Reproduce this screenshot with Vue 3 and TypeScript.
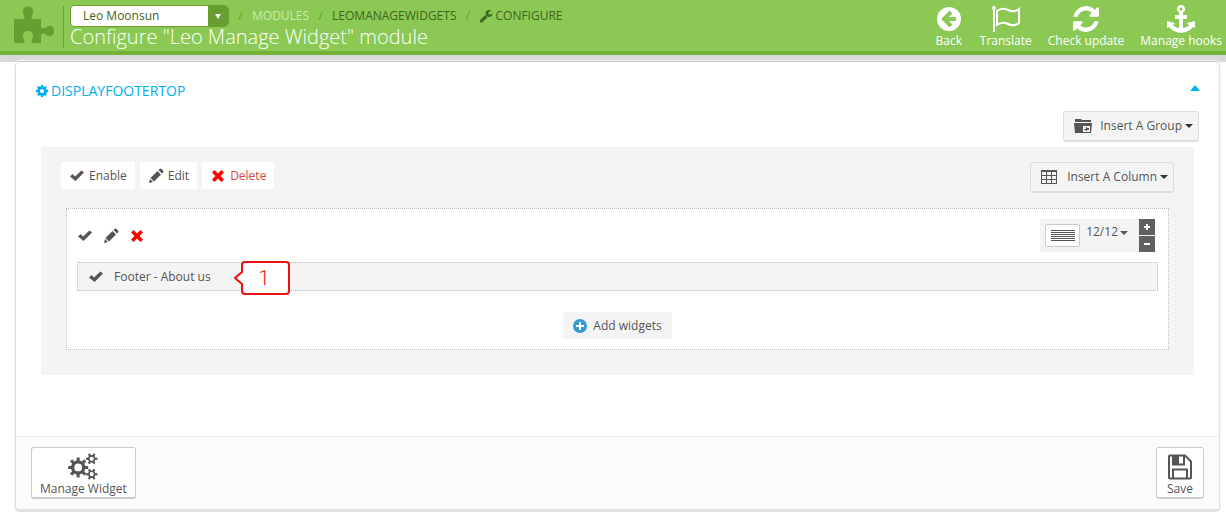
<script setup lang="ts">
import { ref } from 'vue'

const glyphs: Record<string, string> = {
  cog: 'M1152 896q0-106-75-181t-181-75-181 75-75 181 75 181 181 75 181-75 75-181zm512-109v222q0 12-8 23t-20 13l-185 28q-19 54-39 91 35 50 107 138 10 12 10 25t-9 23q-27 37-99 108t-94 71q-12 0-26-9l-138-108q-44 23-91 38-16 136-29 186-7 28-36 28h-222q-14 0-24.5-8.5t-11.5-21.5l-28-184q-49-16-90-37l-141 107q-10 9-25 9-14 0-25-11-126-114-165-168-7-10-7-23 0-12 8-23 15-21 51-66.5t54-70.5q-27-50-41-99l-183-27q-13-2-21-12.5t-8-23.5v-222q0-12 8-23t19-13l186-28q14-46 39-92-40-57-107-138-10-12-10-24 0-10 9-23 26-36 98.5-107.5t94.5-71.5q13 0 26 10l138 107q44-23 91-38 16-136 29-186 7-28 36-28h222q14 0 24.5 8.5t11.5 21.5l28 184q49 16 90 37l142-107q9-9 24-9 13 0 25 10 129 119 165 170 7 8 7 22 0 12-8 23-15 21-51 66.5t-54 70.5q26 50 41 98l183 28q13 2 21 12.5t8 23.5z',
  refresh: 'M1639 1056q0 5-1 7-64 268-268 434.5t-478 166.5q-146 0-282.5-55t-243.5-157l-129 129q-19 19-45 19t-45-19-19-45v-448q0-26 19-45t45-19h448q26 0 45 19t19 45-19 45l-137 137q71 66 161 102t187 36q134 0 250-65t186-179q11-17 53-117 8-23 30-23h192q13 0 22.5 9.5t9.5 22.5zm25-800v448q0 26-19 45t-45 19h-448q-26 0-45-19t-19-45 19-45l138-138q-148-137-349-137-134 0-250 65t-186 179q-11 17-53 117-8 23-30 23h-199q-13 0-22.5-9.5t-9.5-22.5v-7q65-268 270-434.5t480-166.5q146 0 284 55.5t245 156.5l130-129q19-19 45-19t45 19 19 45z',
  wrench: 'M448 1472q0-26-19-45t-45-19-45 19-19 45 19 45 45 19 45-19 19-45zm644-420l-682 682q-37 37-90 37-52 0-91-37l-106-108q-38-36-38-90 0-53 38-91l681-681q39 98 114.5 173.5t173.5 114.5zm634-435q0 39-23 106-47 134-164.5 217.5t-258.5 83.5q-185 0-316.5-131.5t-131.5-316.5 131.5-316.5 316.5-131.5q58 0 121.5 16.5t107.5 46.5q16 11 16 28t-16 28l-293 169v224l193 107q5-3 79-48.5t135.5-81 70.5-35.5q15 0 23.5 10t8.5 25z',
  check: 'M1 8.5L3.500 6 6 8.500 12.500 2.500 15 4.500 6.500 13z',
  pencil: 'M1 15l1-4 3 3zM2.500 10L9.500 3l3.500 3.500-7 7zM10.500 2l1-1q1-1 2 0l1.500 1.500q1 1 0 2l-1 1z',
  times: 'M2 4.500L4.500 2 8 5.500 11.500 2 14 4.500 10.500 8 14 11.500 11.500 14 8 10.500 4.500 14 2 11.500 5.500 8z'
}

function gear(cx: number, cy: number, outer: number, inner: number, hole: number, teeth: number): string {
  const step = (Math.PI * 2) / teeth
  const points: string[] = []
  const at = (r: number, a: number) => points.push(`${(cx + r * Math.cos(a)).toFixed(2)} ${(cy + r * Math.sin(a)).toFixed(2)}`)
  for (let i = 0; i < teeth; i++) {
    const a = i * step
    at(inner, a - step * 0.27)
    at(outer, a - step * 0.19)
    at(outer, a + step * 0.19)
    at(inner, a + step * 0.27)
  }
  return `M${points.join('L')}ZM${cx - hole} ${cy}a${hole} ${hole} 0 1 0 ${hole * 2} 0a${hole} ${hole} 0 1 0 ${-hole * 2} 0Z`
}

const gears = gear(11, 16, 10.5, 7.5, 4, 8) + gear(25, 7, 6, 4, 2.2, 6) + gear(25, 23, 6, 4, 2.2, 6)

const shop = ref('Leo Moonsun')
const columnSize = ref(12)
const open = ref(true)

function resize(step: number) {
  columnSize.value = Math.min(12, Math.max(1, columnSize.value + step))
}
</script>

<template>
  <div class="page">
    <header class="topbar">
      <svg class="puzzle" viewBox="0 0 40 37" aria-hidden="true">
        <path d="M0 13h9q2-1 1-4-1-1-1-4 0-4.500 5-4.500t5 4.500q0 3-1 4-1 3 1 4h8v8q1 2 4 1 2-2 5-2 4 0 4 5t-4 5q-3 0-5-2-3-1-4 1v8h-9q-1-2 0-4 1-1 1-4 0-4-5-4t-5 4q0 3 1 4 1 2 0 4H0z" />
      </svg>
      <div class="heading">
        <nav class="crumbs" aria-label="Breadcrumb">
          <span class="shop">
            <select v-model="shop" aria-label="Shop">
              <option>Leo Moonsun</option>
            </select>
            <svg viewBox="0 0 20 20" aria-hidden="true"><path d="M7 8h6l-3 5z" /></svg>
          </span>
          <span class="slash">/</span>
          <a href="#modules" class="pale">MODULES</a>
          <span class="slash">/</span>
          <a href="#leomanagewidgets">LEOMANAGEWIDGETS</a>
          <span class="slash">/</span>
          <a href="#configure"><svg class="ico" viewBox="0 0 1792 1792" aria-hidden="true"><path :d="glyphs.wrench" /></svg>CONFIGURE</a>
        </nav>
        <h1>Configure "Leo Manage Widget" module</h1>
      </div>
      <nav class="tools" aria-label="Module tools">
        <a href="#back">
          <svg viewBox="0 0 30 28" aria-hidden="true"><circle cx="15" cy="14" r="12" /><path class="cut" d="M17 7l-7 7 7 7M10 14h12" /></svg>
          Back
        </a>
        <a href="#translate">
          <svg viewBox="0 0 30 28" aria-hidden="true"><path class="line" d="M3 3v24M6 6q5-4 11-1t11-1v14q-5 4-11 1t-11 1z" /><circle cx="3" cy="3" r="2" /></svg>
          Translate
        </a>
        <a href="#check-update">
          <svg viewBox="64 64 1664 1664" aria-hidden="true"><path :d="glyphs.refresh" /></svg>
          Check update
        </a>
        <a href="#manage-hooks">
          <svg viewBox="0 0 30 28" aria-hidden="true"><path fill-rule="evenodd" d="M15 0a4 4 0 0 1 2 7.500V10h4v4h-4v9q5-1 6-3l-2-2 8-2v7l-2-1q-4 5-12 6-8-1-12-6l-2 1v-7l8 2-2 2q1 2 6 3v-9H9v-4h4V7.500A4 4 0 0 1 15 0zm0 2.500a1.500 1.500 0 0 0 0 3 1.500 1.500 0 0 0 0-3z" /></svg>
          Manage hooks
        </a>
      </nav>
    </header>

    <main class="panel">
      <div class="panel-head">
        <h2><svg class="ico" viewBox="0 0 1792 1792" aria-hidden="true"><path :d="glyphs.cog" /></svg>DISPLAYFOOTERTOP</h2>
        <button type="button" class="collapse" aria-label="Toggle section" @click="open = !open"><svg viewBox="0 0 10 6" aria-hidden="true"><path d="M0 6l5-6 5 6z" /></svg></button>
      </div>

      <div v-show="open" class="section">
        <div class="right">
          <button type="button" class="insert">
            <svg viewBox="0 0 20 16" aria-hidden="true"><path fill-rule="evenodd" d="M2 1h6l1 1h9v2H2zM1 5h18l-1 10H2zM10 8v6h7V8zM13 9h1v1h2v2h-2v1h-1v-1h-2v-1h2z" /></svg>
            Insert A Group<i class="caret"></i>
          </button>
        </div>

        <section class="group">
          <div class="group-bar">
            <div class="actions">
              <button type="button"><svg class="ico" viewBox="0 0 16 16" aria-hidden="true"><path :d="glyphs.check" /></svg>Enable</button>
              <button type="button"><svg class="ico" viewBox="0 0 16 16" aria-hidden="true"><path :d="glyphs.pencil" /></svg>Edit</button>
              <button type="button" class="danger"><svg class="ico" viewBox="0 0 16 16" aria-hidden="true"><path :d="glyphs.times" /></svg>Delete</button>
            </div>
            <button type="button" class="insert">
              <svg viewBox="0 0 20 16" aria-hidden="true"><path fill-rule="evenodd" d="M1 1h16v14H1zM2 3v3h4V3zM7 3v3h4V3zM12 3v3h4V3zM2 7v3h4V7zM7 7v3h4V7zM12 7v3h4V7zM2 11v3h4v-3zM7 11v3h4v-3zM12 11v3h4v-3z" /></svg>
              Insert A Column<i class="caret"></i>
            </button>
          </div>

          <div class="column">
            <div class="column-bar">
              <div class="icons">
                <button type="button" aria-label="Enable column"><svg class="ico" viewBox="0 0 16 16" aria-hidden="true"><path :d="glyphs.check" /></svg></button>
                <button type="button" aria-label="Edit column"><svg class="ico" viewBox="0 0 16 16" aria-hidden="true"><path :d="glyphs.pencil" /></svg></button>
                <button type="button" class="danger" aria-label="Delete column"><svg class="ico" viewBox="0 0 16 16" aria-hidden="true"><path :d="glyphs.times" /></svg></button>
              </div>
              <div class="size">
                <button type="button" class="size-pick">
                  <span class="lines"><svg viewBox="0 0 24 12" aria-hidden="true"><path d="M0 0h24v1H0zM0 2h24v1H0zM0 4h24v1H0zM0 6h24v1H0zM0 8h24v1H0zM0 10h24v1H0z" /></svg></span>
                  <span>{{ columnSize }}/12<i class="caret small"></i></span>
                </button>
                <div class="steps">
                  <button type="button" aria-label="Wider" @click="resize(1)"><svg viewBox="0 0 16 16" aria-hidden="true"><path d="M5 7h2V5h2v2h2v2H9v2H7V9H5z" /></svg></button>
                  <button type="button" aria-label="Narrower" @click="resize(-1)"><svg viewBox="0 0 16 16" aria-hidden="true"><path d="M5 7h6v2H5z" /></svg></button>
                </div>
              </div>
            </div>

            <div class="widget">
              <svg class="ico" viewBox="0 0 16 16" aria-hidden="true"><path :d="glyphs.check" /></svg>
              <span>Footer - About us</span>
              <div class="callout">
                <svg viewBox="0 0 56 36" aria-hidden="true"><path d="M11 2h41q3 0 3 3v26q0 3-3 3H11q-3 0-3-3v-7l-7-6 7-6V5q0-3 3-3z" /></svg>
                <b>1</b>
              </div>
            </div>

            <button type="button" class="add"><svg viewBox="0 0 16 16" aria-hidden="true"><circle cx="8" cy="8" r="7" /><path d="M7 4h2v3h3v2H9v3H7V9H4V7h3z" /></svg>Add widgets</button>
          </div>
        </section>
      </div>

      <footer class="panel-foot">
        <button type="button">
          <svg class="cogs" viewBox="0 0 32 30" aria-hidden="true"><path fill-rule="evenodd" :d="gears" /></svg>
          Manage Widget
        </button>
        <button type="button">
          <svg class="disk" viewBox="0 0 26 28" aria-hidden="true"><path class="frame" d="M2 4q0-1 1-1h15l6 6v16q0 1-1 1H3q-1 0-1-1zM6 26v-9h14v9M17 3v9H6V3" /><path d="M6 3h6v9H6z" /></svg>
          Save
        </button>
      </footer>
    </main>
  </div>
</template>

<style>
html { background: #fff; }
body { margin: 0; }
</style>

<style scoped>
* { box-sizing: border-box; }
.page { font-family: "Open Sans", sans-serif; font-size: 12px; line-height: 16px; color: #555; overflow: hidden; }
button, select { font: inherit; color: inherit; margin: 0; cursor: pointer; }
button { border: 0; padding: 0; background: none; }
a { text-decoration: none; color: inherit; }
svg { display: block; fill: currentColor; flex: none; }
.ico { width: 16px; height: 16px; }

.topbar { display: flex; height: 55px; background: #8bc954; border-bottom: 4px solid #72b236; box-shadow: 0 7px #d9d9d9; padding-left: 14px; }
.puzzle { width: 40px; height: 37px; margin-top: 6px; color: #669e32; }
.heading { margin: 6px 0 3px 9px; padding-left: 6px; border-left: 1px solid #669e32; }
.crumbs { display: flex; align-items: center; height: 20px; color: #3f6420; white-space: nowrap; }
.crumbs a { display: flex; align-items: center; gap: 2px; }
.crumbs .ico { width: 14px; height: 14px; }
.crumbs .pale { color: #cdeab0; }
.slash { width: 23px; text-align: center; color: #669e32; }
.shop { position: relative; width: 159px; height: 22px; border: 1px solid #669e32; border-radius: 4px; background: #fff; overflow: hidden; }
.shop select { appearance: none; width: 100%; height: 20px; border: 0; padding: 0 24px 0 12px; background: none; }
.shop svg { position: absolute; right: 0; top: 0; width: 20px; height: 20px; background: #669e32; color: #fff; pointer-events: none; }
h1 { margin: 0; font-size: 20px; line-height: 22px; font-weight: 300; color: #fff; white-space: nowrap; }
.tools { display: flex; gap: 16px; margin-left: auto; padding: 5px 4px 0 0; color: #fff; white-space: nowrap; }
.tools a { display: flex; flex-direction: column; align-items: center; }
.tools svg { width: 30px; height: 28px; }
.cut { fill: none; stroke: #8bc954; stroke-width: 4; }
.line { fill: none; stroke: currentColor; stroke-width: 2; }

.panel { position: relative; margin: 6px 6px 0 15px; border: 1px solid #e0e0e0; border-top-color: #c4c4c4; border-bottom: 3px solid #e2e2e2; border-radius: 5px; background: #fff; box-shadow: 0 0 0 1px #f6f6f6; }
.panel-head { display: flex; justify-content: space-between; align-items: flex-start; padding: 19px 19px 0; color: #00aff0; }
h2 { display: flex; align-items: center; gap: 2px; margin: 0; font-size: 14px; line-height: 20px; font-weight: 400; }
h2 .ico { width: 14px; height: 14px; }
.collapse { padding: 4px 0; color: inherit; }
.collapse svg { width: 10px; height: 6px; }
.section { padding: 10px 25px 61px; }
.right { display: flex; justify-content: flex-end; margin-right: -5px; }
.insert { display: flex; align-items: center; height: 31px; padding: 0 5px 0 9px; border: 1px solid #ddd; border-bottom-width: 2px; border-radius: 3px; background: #f4f4f4; }
.insert svg { width: 20px; height: 16px; margin-right: 7px; }
.caret { display: inline-block; margin-left: 3px; border: 4px solid transparent; border-top-color: #333; border-bottom: 0; vertical-align: middle; }
.small { margin-left: 2px; border-top-color: #555; }
.group { margin-top: 5px; padding: 15px 25px 25px; background: #f4f4f4; }
.group-bar { display: flex; justify-content: space-between; margin: 0 -5px; }
.actions { display: flex; gap: 5px; }
.actions button { display: flex; align-items: center; gap: 4px; height: 27px; padding: 0 8px; background: #fff; }
.danger { color: #d9453d; }
.danger .ico { color: #f00; }
.column { margin-top: 15px; padding: 10px; border: 1px dotted #bbb; background: #fff; }
.column-bar { display: flex; justify-content: space-between; }
.icons { display: flex; align-items: center; gap: 10px; }
.size { display: flex; margin-right: 3px; background: #f4f4f4; }
.size-pick { display: flex; gap: 6px; padding: 5px 11px 0 5px; }
.lines { display: flex; align-items: center; justify-content: center; width: 35px; height: 23px; border: 1px solid #ccc; border-radius: 2px; background: #fff; }
.lines svg { width: 24px; height: 12px; }
.steps { display: grid; gap: 1px; }
.steps button { background: #5f5f5f; color: #fff; }
.steps svg { width: 16px; height: 16px; }
.widget { display: flex; align-items: center; gap: 10px; position: relative; height: 29px; margin-top: 10px; padding-left: 10px; border: 1px dotted #bbb; background: #f4f4f4; }
.callout { position: absolute; left: 156px; top: -3px; width: 56px; height: 36px; }
.callout svg { width: 56px; height: 36px; fill: #fff; stroke: #e11; stroke-width: 2; }
.callout b { position: absolute; inset: 0 0 0 4px; color: #e11; font: 300 20px/36px Roboto, sans-serif; text-align: center; }
.add { display: flex; align-items: center; gap: 5px; height: 27px; margin: 21px auto 0; padding: 0 10px 0 9px; background: #f4f4f4; }
.add svg { width: 16px; height: 16px; color: #3498d3; }
.add path { fill: #fff; }
.panel-foot { display: flex; justify-content: space-between; padding: 10px 15px; border-top: 1px solid #eaeaea; border-radius: 0 0 4px 4px; background: #fbfcfe; }
.panel-foot button { display: flex; flex-direction: column; align-items: center; min-width: 48px; padding: 4px 8px 0; border: 1px solid #ccc; border-bottom-width: 2px; border-radius: 3px; background: #fff; }
.cogs { width: 32px; height: 29px; }
.disk { width: 26px; height: 29px; }
.frame { fill: none; stroke: currentColor; stroke-width: 2; }
</style>
